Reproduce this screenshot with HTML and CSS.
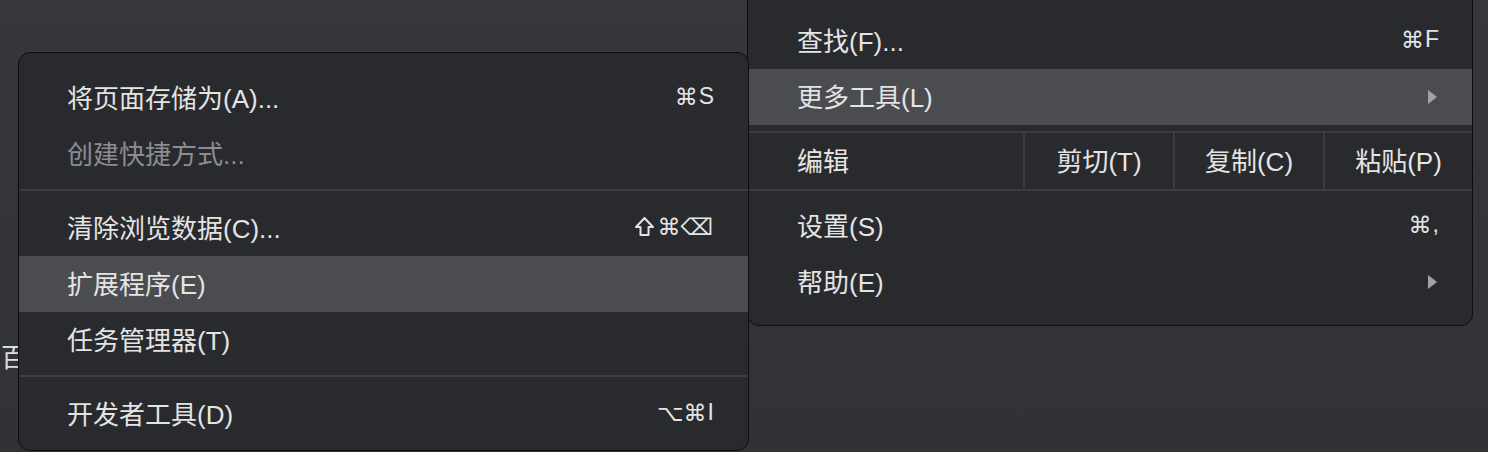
FILE: index.html
```html
<!DOCTYPE html>
<html lang="zh-CN">
<head>
<meta charset="utf-8">
<title>菜单</title>
<link rel="stylesheet" href="styles.css">
</head>
<body>
<div class="desktop">
  <span class="peek">百</span>

  <div class="menu menu-right">
    <div class="item"><span class="label">查找(F)...</span><span class="key"><span class="sym">⌘</span>F</span></div>
    <div class="item active"><span class="label">更多工具(L)</span><span class="arrow"></span></div>
    <div class="sep sep-edit"></div>
    <div class="edit-row">
      <span class="edit-label">编辑</span>
      <span class="edit-cell">剪切(T)</span>
      <span class="edit-cell">复制(C)</span>
      <span class="edit-cell">粘贴(P)</span>
    </div>
    <div class="sep sep-after-edit"></div>
    <div class="item"><span class="label">设置(S)</span><span class="key"><span class="sym">⌘</span>,</span></div>
    <div class="item"><span class="label">帮助(E)</span><span class="arrow"></span></div>
  </div>

  <div class="menu menu-left">
    <div class="item"><span class="label">将页面存储为(A)...</span><span class="key"><span class="sym">⌘</span>S</span></div>
    <div class="item disabled"><span class="label">创建快捷方式...</span></div>
    <div class="sep"></div>
    <div class="item"><span class="label">清除浏览数据(C)...</span><span class="key"><svg class="shift" width="21" height="21" viewBox="0 0 21 21" aria-label="⇧"><path d="M10.5 2 L19 11 H14.5 V19 H6.5 V11 H2 Z" fill="none" stroke="#e4e4e4" stroke-width="2" stroke-linejoin="round"/></svg><span class="sym">⌘⌫</span></span></div>
    <div class="item active"><span class="label">扩展程序(E)</span></div>
    <div class="item"><span class="label">任务管理器(T)</span></div>
    <div class="sep"></div>
    <div class="item"><span class="label">开发者工具(D)</span><span class="key"><span class="sym">⌥⌘</span>I</span></div>
  </div>
</div>
</body>
</html>
```

FILE: styles.css
```css
html, body {
  margin: 0;
  padding: 0;
}

body {
  width: 1488px;
  height: 452px;
  overflow: hidden;
  background: #343539;
  font-family: "Liberation Sans", "Noto Sans CJK SC", sans-serif;
  color: #e4e4e4;
}

.desktop {
  position: relative;
  width: 1488px;
  height: 452px;
  background: linear-gradient(180deg, #36373b 0%, #313236 100%);
}

.peek {
  position: absolute;
  left: 1px;
  top: 343px;
  font-size: 26px;
  line-height: 30px;
  color: #dcdcdc;
}

.menu {
  position: absolute;
  box-sizing: border-box;
  background: #292a2e;
  border: 1px solid #0e0e10;
  border-radius: 12px;
  display: flex;
  flex-direction: column;
}

.menu-left {
  left: 18px;
  top: 52px;
  width: 731px;
  height: 399px;
  padding-top: 17px;
}

.menu-right {
  left: 747px;
  top: -20px;
  width: 726px;
  height: 346px;
  padding-top: 32px;
}

.item {
  height: 56px;
  box-sizing: border-box;
  flex: none;
  display: flex;
  align-items: center;
  justify-content: space-between;
  font-size: 26px;
  padding-bottom: 3px;
}

.menu-left .item {
  padding-left: 48px;
  padding-right: 34px;
}

.menu-right .item {
  padding-left: 49px;
  padding-right: 33px;
}

.item.active {
  background: #4b4c50;
}

.item.disabled .label {
  color: #8c8d90;
}

.key {
  font-family: "Liberation Sans", sans-serif;
  font-size: 23px;
  color: #e4e4e4;
  display: flex;
  align-items: center;
}

.sym {
  font-family: "DejaVu Sans", sans-serif;
  font-size: 23px;
  margin-right: 1px;
}

.shift {
  display: block;
  margin-right: 2px;
}

.arrow {
  width: 0;
  height: 0;
  border-top: 7px solid transparent;
  border-bottom: 7px solid transparent;
  border-left: 9px solid #a2a3a6;
  margin-right: 2px;
  margin-top: 3px;
}

.sep {
  flex: none;
  height: 2px;
  background: #3b3c40;
  margin: 7px 0 9px;
}

.menu-right .sep-edit {
  margin: 6px 0 0;
}

.menu-right .sep-after-edit {
  margin: 0 0 7px;
}

.edit-row {
  height: 56px;
  box-sizing: border-box;
  padding-bottom: 3px;
  flex: none;
  display: flex;
  align-items: stretch;
  font-size: 26px;
}

.edit-label {
  flex: 1;
  display: flex;
  align-items: center;
  padding-left: 49px;
}

.edit-cell {
  width: 148px;
  flex: none;
  border-left: 2px solid #3b3c40;
  margin-bottom: -3px;
  padding-bottom: 3px;
  display: flex;
  align-items: center;
  justify-content: center;
}

.edit-cell:last-child {
  width: 147px;
}
```
